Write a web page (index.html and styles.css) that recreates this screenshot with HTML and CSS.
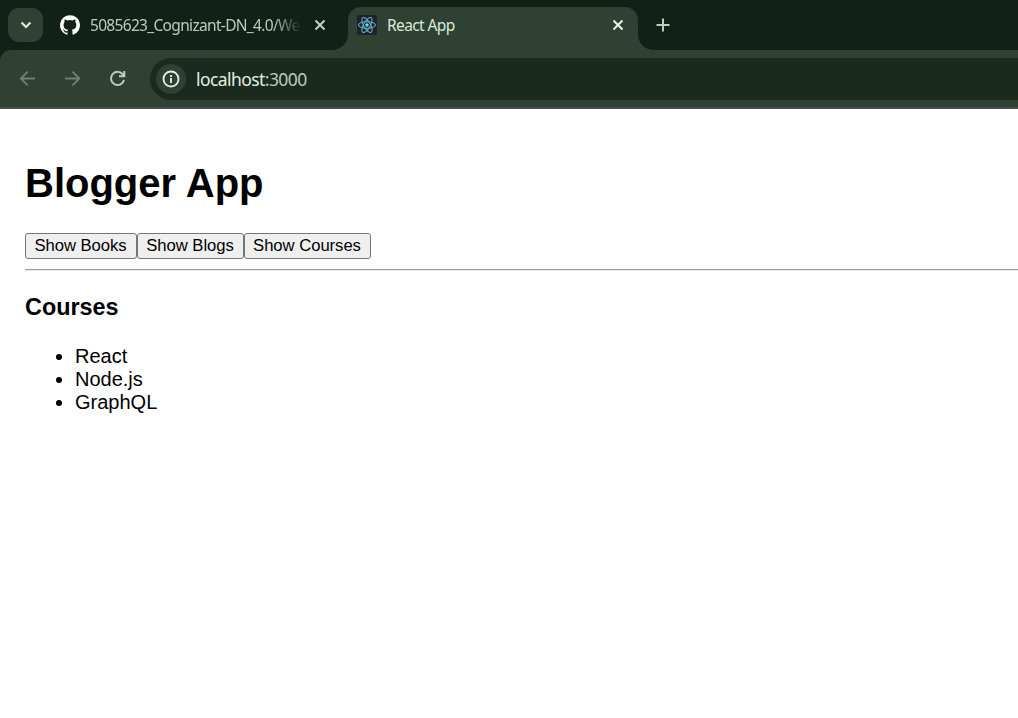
FILE: index.html
```
<!DOCTYPE html>
<html lang="en">
<head>
<meta charset="utf-8">
<title>React App</title>
<link rel="stylesheet" href="styles.css">
</head>
<body>
<header class="browser">
  <div class="tabstrip">
    <div class="tab-search"><svg width="12" height="8" viewBox="0 0 12 8"><path d="M1.500 1.500 6 6l4.500-4.500"/></svg></div>
    <div class="tab tab-idle">
      <svg class="favicon github" width="20" height="20" viewBox="0 0 24 24"><path d="M12 .3a12 12 0 0 0-3.800 23.400c.6.1.8-.3.8-.6v-2c-3.300.7-4-1.600-4-1.600-.6-1.400-1.400-1.800-1.400-1.800-1-.7.1-.7.1-.7 1.200 0 1.900 1.200 1.900 1.200 1 1.800 2.800 1.300 3.500 1 0-.8.4-1.300.7-1.600-2.700-.3-5.500-1.300-5.500-6 0-1.200.5-2.300 1.300-3.100-.2-.4-.6-1.600 0-3.200 0 0 1-.3 3.400 1.200a11.500 11.500 0 0 1 6 0c2.300-1.500 3.300-1.200 3.300-1.200.6 1.600.2 2.800 0 3.200.9.8 1.300 1.900 1.300 3.200 0 4.600-2.800 5.600-5.500 5.900.5.4.9 1 .9 2.200v3.300c0 .3.1.7.8.6A12 12 0 0 0 12 .3"/></svg>
      <span class="tab-title">5085623_Cognizant-DN_4.0/We</span>
      <svg class="close" width="12" height="12" viewBox="0 0 12 12"><path d="m1.500 1.500 9 9m0-9-9 9"/></svg>
    </div>
    <div class="tab tab-active">
      <svg class="favicon" width="20" height="20" viewBox="0 0 20 20"><rect width="20" height="20" rx="2" fill="#20242a"/><g fill="none" stroke="#61b8d4" stroke-width="1"><ellipse cx="10" cy="10" rx="8.500" ry="3.300"/><ellipse cx="10" cy="10" rx="8.500" ry="3.300" transform="rotate(60 10 10)"/><ellipse cx="10" cy="10" rx="8.500" ry="3.300" transform="rotate(120 10 10)"/></g><circle cx="10" cy="10" r="1.700" fill="#75dcf8"/></svg>
      <span class="tab-title">React App</span>
      <svg class="close" width="12" height="12" viewBox="0 0 12 12"><path d="m1.500 1.500 9 9m0-9-9 9"/></svg>
    </div>
    <svg class="new-tab" width="14" height="14" viewBox="0 0 14 14"><path d="M7 .5v13M.5 7h13"/></svg>
  </div>
  <div class="toolbar">
    <svg class="nav dim" width="16" height="16" viewBox="0 0 16 16"><path d="M15 7.500H1.500M7.700 .7 .9 7.500 7.700 14.300"/></svg>
    <svg class="nav dim" width="16" height="16" viewBox="0 0 16 16"><path d="M0 7.500h14M7.500 .7 14.300 7.500 7.500 14.300"/></svg>
    <svg class="nav reload" width="16" height="16" viewBox="0 0 16 16"><path d="M14 9A6.600 6.600 0 1 1 12.500 3L14 4.700M14.300 0V5.200H9"/></svg>
    <div class="address">
      <div class="site-info"><svg width="18" height="18" viewBox="0 0 18 18"><circle cx="9" cy="9" r="7.500"/><path d="M9 8v5M9 5v1.900"/></svg></div>
      <span class="url">localhost<span class="port">:3000</span></span>
    </div>
  </div>
</header>
<main class="page">
  <h1 class="title">Blogger App</h1>
  <div class="actions"><button class="btn btn-books">Show Books</button><button class="btn btn-blogs">Show Blogs</button><button class="btn btn-courses">Show Courses</button></div>
  <hr class="rule">
  <h3 class="subtitle">Courses</h3>
  <ul class="courses"><li>React</li><li>Node.js</li><li>GraphQL</li></ul>
</main>
</body>
</html>
```
FILE: styles.css
```
* { box-sizing: border-box; }
body { margin: 0; background: #fff; height: 718px; overflow: hidden; font-family: "Liberation Sans", Arial, sans-serif; color: #000; }
svg { display: block; flex: none; fill: none; overflow: visible; }
.browser { height: 109px; background: #122117; font-family: "Noto Sans", "Open Sans", sans-serif; }
.tabstrip { height: 50px; display: flex; align-items: flex-start; }
.tab-search { margin: 8px 0 0 8px; width: 35px; height: 34px; border-radius: 11px; background: #2f4133; display: flex; align-items: center; justify-content: center; }
.tab-search svg { stroke: #dce9dd; stroke-width: 2.2; }
.tab { display: flex; align-items: center; font-size: 15.500px; color: #b9cebb; }
.tab-idle { width: 305px; height: 50px; padding-left: 17px; }
.github { fill: #fff; }
.tab-title { white-space: nowrap; margin-left: 10px; line-height: 24px; }
.tab-idle .tab-title { width: 210px; letter-spacing: -0.680px; -webkit-mask-image: linear-gradient(90deg, #000 182px, transparent 212px); mask-image: linear-gradient(90deg, #000 182px, transparent 212px); }
.close { stroke: #c3d3c4; stroke-width: 2; }
.tab-idle .close { margin-left: 14px; }
.tab-active { position: relative; width: 290px; height: 43px; margin-top: 7px; padding: 0 14.500px 7px 9px; border-radius: 13px 13px 0 0; background: #2f4133; color: #dceadd; }
.tab-active::before, .tab-active::after { content: ""; position: absolute; bottom: 0; width: 15px; height: 15px; }
.tab-active::before { left: -15px; background: radial-gradient(circle at 0 0, transparent 14.500px, #2f4133 15px); }
.tab-active::after { right: -15px; background: radial-gradient(circle at 100% 0, transparent 14.500px, #2f4133 15px); }
.tab-active .tab-title { letter-spacing: -0.600px; }
.tab-active .close { margin-left: auto; stroke: #edf5ed; }
.new-tab { margin: 18px 0 0 18px; stroke: #b9d0bb; stroke-width: 2; }
.toolbar { height: 59px; padding: 8px 0 7px 20px; border-bottom: 2px solid #494b48; border-radius: 11px 0 0 0; background: #2f4133; display: flex; align-items: flex-start; gap: 29px; }
.nav { margin-top: 13px; stroke: #b9cebb; stroke-width: 1.900; }
.dim { stroke: #71806f; }
.reload { stroke-width: 2; }
.address { flex: 1; margin-left: -5px; height: 42px; padding-left: 6px; border-radius: 21px 0 0 21px; background: #1a2a1f; display: flex; align-items: center; }
.site-info { width: 30px; height: 30px; border-radius: 50%; background: #2f4133; display: flex; align-items: center; justify-content: center; }
.site-info svg { stroke: #e0eee1; stroke-width: 1.900; }
.url { margin-left: 10px; font-size: 17.500px; line-height: 24px; letter-spacing: -0.570px; color: #e4eee4; }
.port { color: #b9cebb; }
.page { padding: 47px 0 0 25px; }
.title { margin: 0; font-size: 40px; line-height: 54px; }
.actions { display: flex; margin-top: 23px; }
.btn { height: 26px; padding: 0 1px 1px 0; border: 1px solid #767676; border-radius: 3px; background: #efefef; color: #000; font: 16.670px/22px "Liberation Sans", Arial, sans-serif; letter-spacing: -0.040px; white-space: nowrap; }
.btn-books { width: 112px; }
.btn-blogs { width: 107px; }
.btn-courses { width: 127px; }
.rule { margin: 10px 0 0; border: 0; border-top: 1px solid #999; border-bottom: 1px solid #ededed; }
.subtitle { margin: 23px 0 0; font-size: 23.400px; line-height: 27px; }
.courses { margin: 24px 0 0; padding-left: 50px; font-size: 20px; line-height: 23px; }
```
